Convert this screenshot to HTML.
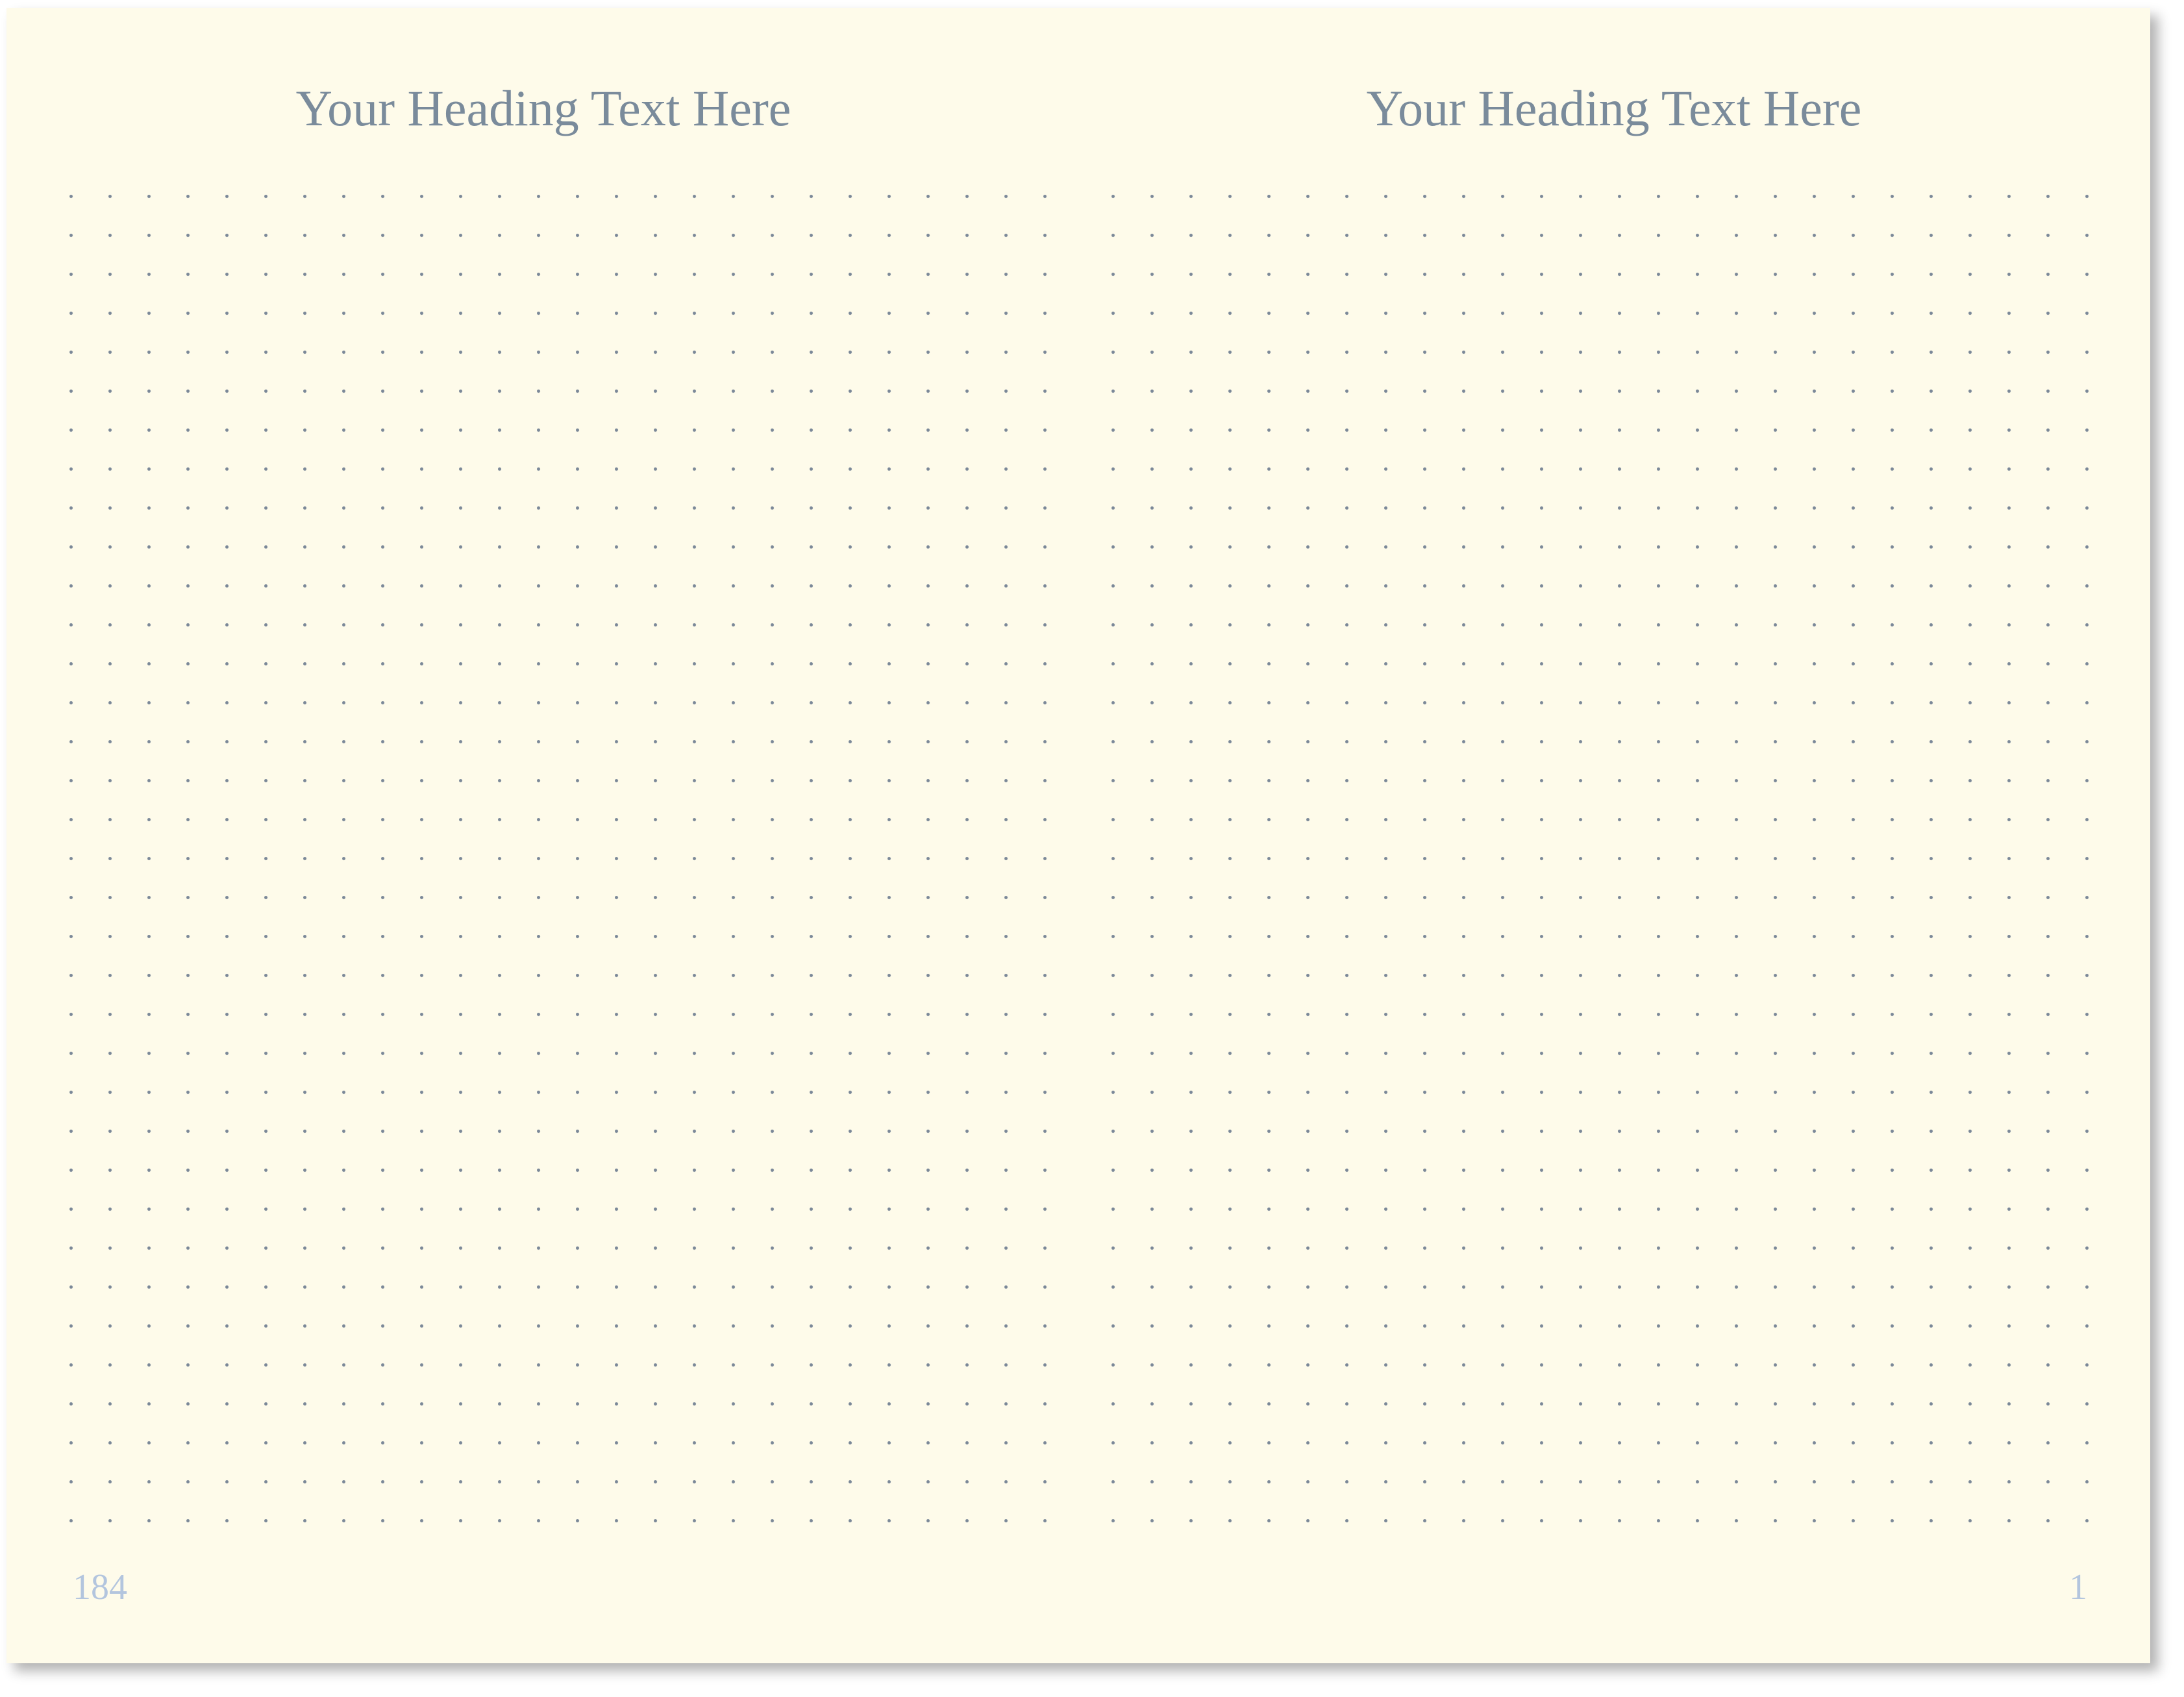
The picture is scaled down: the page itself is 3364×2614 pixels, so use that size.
<!DOCTYPE html>
<html><head><meta charset="utf-8">
<style>
html,body{margin:0;padding:0;background:#fff;width:3364px;height:2614px;overflow:hidden;position:relative;}
.page{position:absolute;left:10px;top:12px;width:3302px;height:2550px;background:#fefbea;box-shadow:12px 12px 18px rgba(0,0,0,0.3);}
.grid{position:absolute;top:299.5px;width:1505px;height:2045px;
background-image:radial-gradient(circle at 2.5px 2.5px,#7b8898 0,#7b8898 2.1px,rgba(123,136,152,0) 2.9px);
background-size:60px 60px;}
.h{position:absolute;top:122px;width:1200px;text-align:center;font-family:"Liberation Serif",serif;font-size:78px;color:#7a8b9b;line-height:90px;white-space:nowrap;}
.n{position:absolute;top:2410px;font-family:"Liberation Serif",serif;font-size:56px;color:#b3c5de;line-height:70px;}
</style></head><body>
<div class="page"></div>
<div class="h" style="left:237px">Your Heading Text Here</div>
<div class="h" style="left:1886px">Your Heading Text Here</div>
<div class="grid" style="left:106.5px"></div>
<div class="grid" style="left:1711.5px"></div>
<div class="n" style="left:112px">184</div>
<div class="n" style="left:3187px">1</div>
</body></html>
